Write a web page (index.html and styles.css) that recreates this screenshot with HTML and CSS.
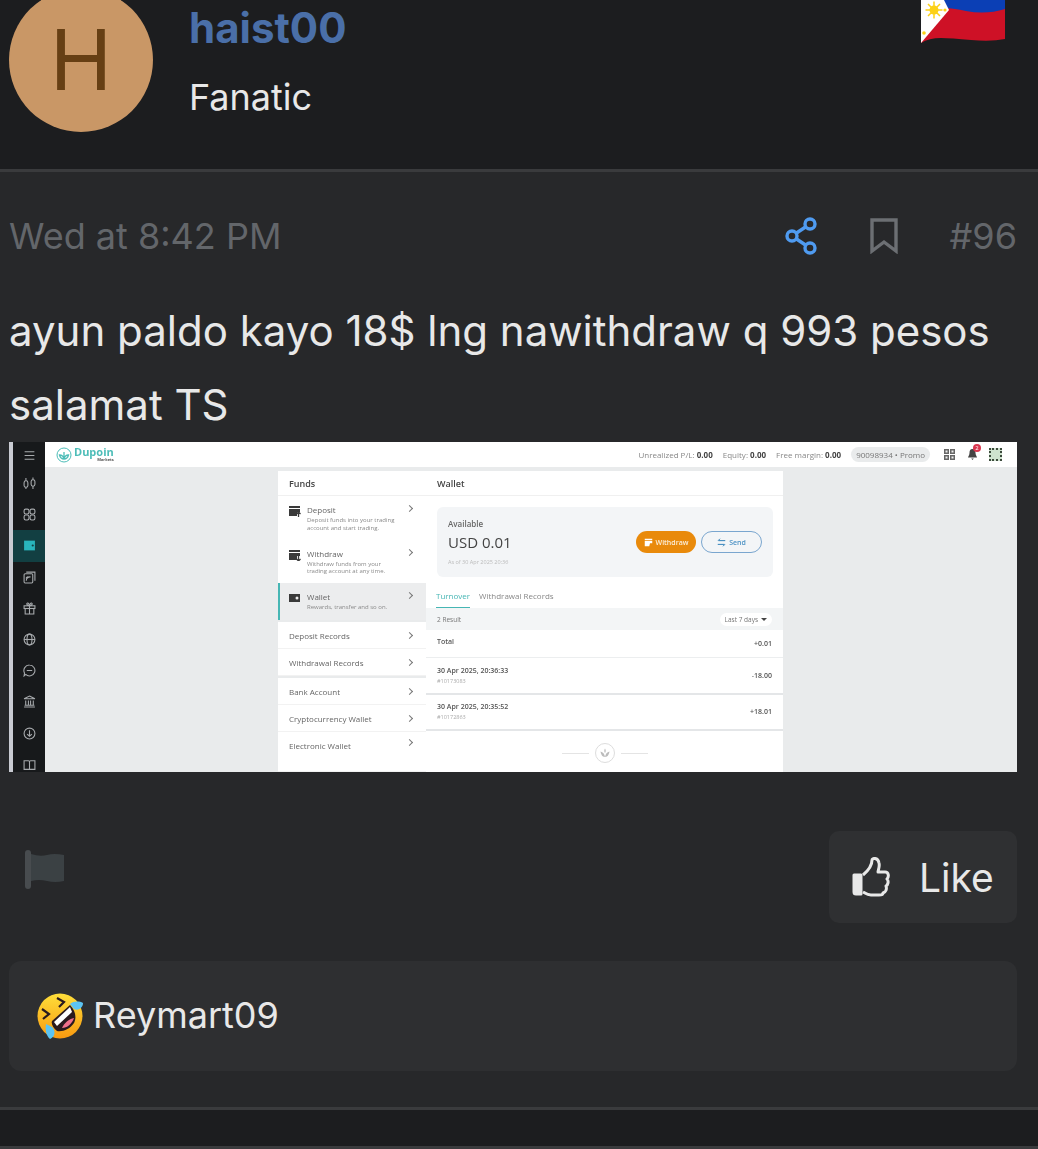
FILE: index.html
```html
<!DOCTYPE html>
<html lang="en">
<head>
    <meta charset="UTF-8">
    <meta name="viewport" content="width=device-width, initial-scale=1.0">
    <title>haist00 post #96</title>
    <link rel="stylesheet" href="styles.css">
</head>
<body>
    <!-- Author -->
    <header class="author">
        <div class="avatar">H</div>
        <div class="author-info">
            <a href="#" class="author-name">haist00</a>
            <div class="author-rank">Fanatic</div>
        </div>
        <svg class="flag" width="84" height="43" viewBox="0 0 84 43">
            <path d="M0 0H84V39Q70 42 50 40T20 38Q8 38 0 43Z" fill="#ce1126"/>
            <path d="M18 0H84V9Q65 15 45 11T27 9Z" fill="#0b3fb5"/>
            <path d="M0 0H23L28 10 0 43Z" fill="#fff"/>
            <path d="M13 1.500V18.500M4.500 10H21.500M7 4 19 16M19 4 7 16" stroke="#fcd116" stroke-width="1.500"/>
            <circle cx="13" cy="10" r="4.500" fill="#fcd116"/>
            <circle cx="24" cy="10" r="1.600" fill="#fcd116"/>
            <circle cx="3" cy="33" r="1.800" fill="#fcd116"/>
        </svg>
    </header>

    <article class="post">
        <div class="post-meta">
            <span class="post-date">Wed at 8:42 PM</span>
            <div class="post-actions">
                <svg class="icon-share" width="34" height="38" viewBox="0 0 34 38" fill="none" stroke="#4f9bf0" stroke-width="3.400">
                    <circle cx="8" cy="19" r="5"/>
                    <circle cx="26" cy="7" r="5"/>
                    <circle cx="26" cy="31" r="5"/>
                    <path d="M12.500 16 21.500 10M12.500 22 21.500 28"/>
                </svg>
                <svg class="icon-bookmark" width="28" height="36" viewBox="0 0 28 36" fill="none" stroke="#6c6f73" stroke-width="3.400">
                    <path d="M2 2H26V33L14 24 2 33Z"/>
                </svg>
                <span class="post-number">#96</span>
            </div>
        </div>

        <p class="post-text">ayun paldo kayo 18$ lng nawithdraw q 993 pesos salamat TS</p>

        <!-- Zrzut ekranu z portfela -->
        <div class="shot">
            <div class="shot-rail"></div>
            <nav class="shot-side">
                <div class="side-item side-first"><svg viewBox="0 0 12 12"><path d="M1.500 6H10.500M1.500 2.500H10.500M1.500 9.500H10.500"/></svg></div>
                <div class="side-item"><svg viewBox="0 0 12 12"><rect x="1" y="3.500" width="3.500" height="6" rx="1.700"/><rect x="7.500" y="2.500" width="3.500" height="6" rx="1.700"/><path d="M2.700 1V3.500M2.700 9.500V11M9.200 .5V2.500M9.200 8.500V11"/></svg></div>
                <div class="side-item"><svg viewBox="0 0 12 12"><rect x="1" y="1" width="4.500" height="4.500" rx="1.500"/><rect x="6.500" y="1" width="4.500" height="4.500" rx="1.500"/><rect x="1" y="6.500" width="4.500" height="4.500" rx="1.500"/><rect x="6.500" y="6.500" width="4.500" height="4.500" rx="1.500"/></svg></div>
                <div class="side-item side-active"><svg viewBox="0 0 12 12"><path class="solid" d="M1 1.500H11V10.500H1Z"/><circle cx="9" cy="6" r="1" fill="#123f42" stroke="none"/></svg></div>
                <div class="side-item"><svg viewBox="0 0 12 12"><rect x="1" y="2.500" width="8" height="8.500" rx="1"/><path d="M3 1H11V9M3 9A3.500 3.500 0 0 1 7 5.500M3 7A1.500 1.500 0 0 1 5 5.500"/></svg></div>
                <div class="side-item"><svg viewBox="0 0 12 12"><rect x="1" y="3.500" width="10" height="2.500"/><path d="M2 6V11H10V6M6 3.500V11M6 3.500C3 3.500 3 .5 4.500 1 5.500 1.500 6 3.500 6 3.500 6 3.500 6.500 1.500 7.500 1 9 .5 9 3.500 6 3.500Z"/></svg></div>
                <div class="side-item"><svg viewBox="0 0 12 12"><circle cx="6" cy="6" r="5"/><ellipse cx="6" cy="6" rx="2.300" ry="5"/><path d="M1 6H11"/></svg></div>
                <div class="side-item"><svg viewBox="0 0 12 12"><path d="M6 1A5 5 0 1 1 2.500 9.600L1 11 1.400 8.300A5 5 0 0 1 6 1ZM3.500 6H8.500"/></svg></div>
                <div class="side-item"><svg viewBox="0 0 12 12"><path d="M6 1 11 3.500H1ZM2.500 5V9M5 5V9M7 5V9M9.500 5V9M1.500 9.500H10.500M1 11H11"/></svg></div>
                <div class="side-item"><svg viewBox="0 0 12 12"><circle cx="6" cy="6" r="5"/><path d="M6 3V8.500M3.800 6.500 6 8.500 8.200 6.500"/></svg></div>
                <div class="side-item"><svg viewBox="0 0 12 12"><path d="M1 2.500H5A1 1 0 0 1 6 3.500V10.500H1ZM11 2.500H7A1 1 0 0 0 6 3.500V10.500H11Z"/></svg></div>
            </nav>
            <div class="shot-main">
                <div class="topbar">
                    <div class="logo">
                        <svg width="16" height="16" viewBox="0 0 16 16" fill="none" stroke="#4dbdb8">
                            <circle cx="8" cy="8" r="7"/>
                            <path d="M8 12V5M8 12C5 12 4 10 3.500 8 6 8 7.500 9.500 8 12 8.500 9.500 10 8 12.500 8 12 10 11 12 8 12Z" stroke-width="1.300"/>
                        </svg>
                        <div class="logo-text">
                            <span class="logo-name">Dupoin</span>
                            <span class="logo-sub">Markets</span>
                        </div>
                    </div>
                    <div class="topbar-right">
                        <span class="stat">Unrealized P/L: <b>0.00</b></span>
                        <span class="stat">Equity: <b>0.00</b></span>
                        <span class="stat">Free margin: <b>0.00</b></span>
                        <span class="account">90098934 • Promo</span>
                        <svg class="top-icon" width="11" height="11" viewBox="0 0 11 11" fill="#666"><path d="M0 0H5V5H0ZM6 0H11V5H6ZM0 6H5V11H0ZM6 6H11V11H6Z"/><path d="M1.500 1.500H3.500V3.500H1.500ZM7.500 1.500H9.500V3.500H7.500ZM1.500 7.500H3.500V9.500H1.500ZM7.500 7.500H9.500V9.500H7.500Z" fill="#eee"/></svg>
                        <div class="bell">
                            <svg width="9" height="11" viewBox="0 0 9 11" fill="#444"><path d="M4.500 0C7 0 7.500 2 7.500 4 7.500 6 9 8 9 8.500H0C0 8 1.500 6 1.500 4 1.500 2 2 0 4.500 0ZM3.200 9.500H5.800L4.500 11Z"/></svg>
                            <span class="bell-badge">2</span>
                        </div>
                        <div class="dots"></div>
                    </div>
                </div>

                <div class="shot-content">
                    <section class="funds">
                        <div class="panel-title">Funds</div>
                        <div class="fund-item">
                            <svg class="fund-icon" viewBox="0 0 12 12"><path d="M0 1H11V3H0ZM0 4H11V7H8V11H0Z"/><path d="M9.500 12V7.500M7.500 9 9.500 7 11.500 9" fill="none" stroke="#3a3a3a" stroke-width="1.300"/></svg>
                            <div class="fund-text">
                                <div class="fund-name">Deposit</div>
                                <div class="fund-desc">Deposit funds into your trading<br>account and start trading.</div>
                            </div>
                            <span class="chev"></span>
                        </div>
                        <div class="fund-item">
                            <svg class="fund-icon" viewBox="0 0 12 12"><path d="M0 1H11V3H0ZM0 4H11V7H8V11H0Z"/><path d="M9.500 7V11.500M7.500 10 9.500 12 11.500 10" fill="none" stroke="#3a3a3a" stroke-width="1.300"/></svg>
                            <div class="fund-text">
                                <div class="fund-name">Withdraw</div>
                                <div class="fund-desc">Withdraw funds from your<br>trading account at any time.</div>
                            </div>
                            <span class="chev"></span>
                        </div>
                        <div class="fund-item fund-active">
                            <svg class="fund-icon" viewBox="0 0 12 12"><path d="M0 2H11V10H0Z"/><circle cx="8" cy="6" r="1.500" fill="#eee"/></svg>
                            <div class="fund-text">
                                <div class="fund-name">Wallet</div>
                                <div class="fund-desc">Rewards, transfer and so on.</div>
                            </div>
                            <span class="chev"></span>
                        </div>
                        <div class="fund-row fund-row-first">Deposit Records<span class="chev"></span></div>
                        <div class="fund-row">Withdrawal Records<span class="chev"></span></div>
                        <div class="fund-row fund-row-group">Bank Account<span class="chev"></span></div>
                        <div class="fund-row">Cryptocurrency Wallet<span class="chev"></span></div>
                        <div class="fund-row">Electronic Wallet<span class="chev"></span></div>
                    </section>

                    <section class="wallet">
                        <div class="panel-title">Wallet</div>
                        <div class="balance">
                            <div>
                                <div class="balance-label">Available</div>
                                <div class="balance-value">USD 0.01</div>
                                <div class="balance-date">As of 30 Apr 2025 20:36</div>
                            </div>
                            <div class="balance-buttons">
                                <a href="#" class="pill pill-orange">
                                    <svg width="9" height="9" viewBox="0 0 12 12" fill="#fff"><path d="M1 1H11V3H1ZM1 4H11V7H8L7 11H1Z"/></svg>
                                    Withdraw
                                </a>
                                <a href="#" class="pill pill-outline">
                                    <svg width="9" height="9" viewBox="0 0 12 12" fill="none" stroke="#2d7fb8" stroke-width="1.300"><path d="M11 3.500H2M4 1 1.500 3.500M1 8.500H10M8 11 10.500 8.500"/></svg>
                                    Send
                                </a>
                            </div>
                        </div>
                        <div class="tabs">
                            <span class="tab tab-active">Turnover</span>
                            <span class="tab">Withdrawal Records</span>
                        </div>
                        <div class="filter-bar">
                            <span>2 Result</span>
                            <span class="filter-pill">Last 7 days <i class="caret"></i></span>
                        </div>
                        <div class="tx tx-total">
                            <div class="tx-date tx-total-label">Total</div>
                            <div class="tx-amount">+0.01</div>
                        </div>
                        <div class="tx">
                            <div>
                                <div class="tx-date">30 Apr 2025, 20:36:33</div>
                                <div class="tx-id">#10173083</div>
                            </div>
                            <div class="tx-amount">-18.00</div>
                        </div>
                        <div class="tx">
                            <div>
                                <div class="tx-date">30 Apr 2025, 20:35:52</div>
                                <div class="tx-id">#10172863</div>
                            </div>
                            <div class="tx-amount">+18.01</div>
                        </div>
                        <div class="wallet-end">
                            <span class="end-line"></span>
                            <span class="end-badge">
                                <svg width="14" height="14" viewBox="0 0 14 14" fill="#bbb"><path d="M7 11C4 11 3 8 2.500 5.500 5 6 6.500 8 7 11 7.500 8 9 6 11.500 5.500 11 8 10 11 7 11ZM7 7C6 5.500 6 4 7 2.500 8 4 8 5.500 7 7Z"/></svg>
                            </span>
                            <span class="end-line"></span>
                        </div>
                    </section>
                </div>
            </div>
        </div>

        <div class="post-tools">
            <svg class="icon-report" width="40" height="40" viewBox="0 0 40 40">
                <rect x="0" y="0" width="6" height="39" rx="3" fill="#484c4f"/>
                <path d="M6 4Q15 7 22 5T39 5V31Q30 33 22 31T6 31Z" fill="#3b4144"/>
            </svg>
            <a href="#" class="like-button">
                <svg width="38" height="40" viewBox="0 0 38 40" fill="none" stroke="#e8e8e8" stroke-width="3" stroke-linejoin="round">
                    <path d="M11 18 C17 13 20 9 20 3 C20 1 26 0 27 6 C28 10 26 13 26 15 H33 C37 15 37 20 35 22 C37 24 36 28 34 29 C35 32 34 35 31 36 C31 38 29 38 27 38 H19 C15 38 13 36 11 35"/>
                    <path d="M2 18H9V37H4Q2 37 2 35Z" fill="#e8e8e8"/>
                </svg>
                Like
            </a>
        </div>

        <div class="reactions">
            <svg class="emoji" width="46" height="46" viewBox="0 0 46 46">
                <defs>
                    <linearGradient id="face" x1="0" y1="0" x2="0" y2="1">
                        <stop offset="0" stop-color="#fede3a"/>
                        <stop offset="1" stop-color="#f99a10"/>
                    </linearGradient>
                </defs>
                <circle cx="23" cy="23" r="22.500" fill="url(#face)"/>
                <path d="M33 12C38 17 40 24 37 30 33 36 26 39 20 38 16 35 14 31 15 28Z" fill="#2a1a1e"/>
                <path d="M33 14 17 29 20 33 35 19Z" fill="#fff"/>
                <path d="M37 25C35 31 30 35 25 35 27 30 32 26 37 25Z" fill="#f0708c"/>
                <path d="M20 5 27 9 22 14M5 16 12 21 6 26" fill="none" stroke="#2a1a1e" stroke-width="2.200"/>
                <path d="M33 11C37 8 42 8 46 10 46 15 41 18 37 16Z" fill="#5cc4f2"/>
                <path d="M9 31C8 36 9 43 13 46 18 44 19 38 15 34Z" fill="#5cc4f2"/>
            </svg>
            <span class="reaction-name">Reymart09</span>
        </div>
    </article>

    <div class="page-gap"></div>
</body>
</html>
```

FILE: styles.css
```css
/* Ogólne ustawienia */
body {
    font-family: Inter, "Liberation Sans", sans-serif;
    margin: 0;
    padding: 0;
    background-color: #1c1d1f;
    color: #e8e8e8;
    overflow: hidden;
}

a {
    text-decoration: none;
}

/* Author */
.author {
    display: flex;
    gap: 36px;
    height: 184px;
    margin-top: -12px;
    padding-left: 9px;
    padding-right: 33px;
    box-sizing: border-box;
    border-bottom: 3px solid #3a3b3d;
}

.avatar {
    width: 144px;
    height: 144px;
    border-radius: 50%;
    background-color: #c99766;
    color: #663f14;
    font-size: 84px;
    line-height: 144px;
    text-align: center;
    flex-shrink: 0;
}

.author-info {
    flex: 1;
    padding-top: 12px;
}

.author-name {
    display: block;
    color: #4a6fa8;
    font-size: 42px;
    font-weight: 700;
    line-height: 56px;
}

.author-rank {
    margin-top: 20px;
    font-size: 36px;
    line-height: 42px;
}

.flag {
    margin-top: 12px;
}

/* Post */
.post {
    background-color: #27282a;
    padding: 0 21px 0 9px;
    height: 938px;
    box-sizing: border-box;
    border-bottom: 3px solid #3a3b3d;
}

.post-meta {
    display: flex;
    justify-content: space-between;
    align-items: center;
    height: 122px;
    padding-top: 6px;
    box-sizing: border-box;
}

.post-date {
    color: #63666a;
    font-size: 36px;
}

.post-actions {
    display: flex;
    align-items: center;
    gap: 52px;
    color: #63666a;
    font-size: 36px;
}

.post-text {
    margin: 0;
    font-size: 42px;
    line-height: 74px;
    color: #e8e8e8;
}

/* Zrzut ekranu */
.shot {
    display: flex;
    height: 330px;
    background-color: #e9ebec;
    font-family: "Open Sans", "Liberation Sans", sans-serif;
    color: #555;
    filter: blur(0.5px);
    overflow: hidden;
}

.shot-rail {
    width: 4px;
    background-color: #c9cbd2;
}

.shot-side {
    width: 32px;
    background-color: #17191b;
    flex-shrink: 0;
}

.side-item {
    display: flex;
    align-items: center;
    justify-content: center;
    height: 31.2px;
}

.side-item svg {
    width: 13px;
    height: 13px;
    fill: none;
    stroke: #a7aaad;
    stroke-width: 1;
}

.side-first {
    height: 26px;
}

.side-active {
    background-color: #123f42;
}

.side-active svg .solid {
    fill: #29b5bd;
    stroke: none;
}

.shot-main {
    flex: 1;
    display: flex;
    flex-direction: column;
    min-width: 0;
}

.topbar {
    display: flex;
    justify-content: space-between;
    align-items: center;
    height: 25px;
    padding: 0 15px 0 11px;
    background-color: #fff;
    flex-shrink: 0;
}

.logo {
    display: flex;
    align-items: center;
    gap: 2px;
}

.logo-text {
    display: flex;
    flex-direction: column;
    align-items: flex-end;
}

.logo-name {
    color: #4dbdb8;
    font-size: 11px;
    font-weight: 700;
    line-height: 10px;
}

.logo-sub {
    color: #555;
    font-size: 4px;
    line-height: 5px;
    font-weight: 700;
}

.topbar-right {
    display: flex;
    align-items: center;
    gap: 10px;
    font-size: 8px;
    color: #888;
}

.stat b {
    color: #444;
}

.account {
    background-color: #e9ebec;
    border-radius: 9px;
    padding: 2px 5px;
    color: #777;
}

.top-icon {
    margin-left: 4px;
}

.bell {
    position: relative;
    display: flex;
    margin-left: 3px;
}

.bell-badge {
    position: absolute;
    top: -5px;
    right: -4px;
    width: 8px;
    height: 8px;
    border-radius: 50%;
    background-color: #d9364f;
    color: #fff;
    font-size: 6px;
    line-height: 8px;
    text-align: center;
}

.dots {
    width: 9px;
    height: 9px;
    margin-left: 2px;
    background-color: #cfe3cf;
    border: 2px dotted #3c4a3c;
}

.shot-content {
    display: flex;
    padding: 4px 0 0 233px;
    flex: 1;
}

.funds {
    width: 148px;
    background-color: #e9ebec;
    display: flex;
    flex-direction: column;
    flex-shrink: 0;
}

.panel-title {
    height: 25px;
    padding-left: 11px;
    background-color: #fff;
    border-bottom: 1px solid #f0f0f0;
    box-sizing: border-box;
    font-size: 9px;
    font-weight: 600;
    line-height: 25px;
    color: #444;
}

.fund-item {
    display: flex;
    gap: 6px;
    padding: 8px 11px 0 11px;
    height: 43.5px;
    box-sizing: border-box;
    background-color: #fff;
}

.fund-icon {
    width: 12px;
    height: 12px;
    margin-top: 1px;
    fill: #3a3a3a;
    flex-shrink: 0;
}

.fund-text {
    flex: 1;
}

.fund-name {
    font-size: 8px;
    line-height: 11px;
    color: #666;
}

.fund-desc {
    margin-top: 2px;
    font-size: 6px;
    line-height: 7.5px;
    color: #8a8a8a;
    white-space: nowrap;
}

.fund-active {
    height: 37px;
    padding-left: 9px;
    background-color: #ecedee;
    border-left: 2px solid #46b6b4;
}

.chev {
    width: 4px;
    height: 4px;
    margin: 2px 3px 0 0;
    border-top: 1px solid #777;
    border-right: 1px solid #777;
    transform: rotate(45deg);
    flex-shrink: 0;
}

.fund-row {
    display: flex;
    justify-content: space-between;
    align-items: center;
    height: 27px;
    padding: 0 11px;
    box-sizing: border-box;
    background-color: #fff;
    border-bottom: 1px solid #f2f2f2;
    font-size: 8px;
    color: #666;
}

.fund-row .chev {
    margin-top: 0;
}

.fund-row-first {
    margin-top: 2px;
}

.fund-row-group {
    margin-top: 2px;
}

.funds .fund-row:last-child {
    flex: 1;
    height: auto;
    align-items: flex-start;
    padding-top: 8px;
}

.wallet {
    width: 357px;
    background-color: #fff;
    display: flex;
    flex-direction: column;
    flex-shrink: 0;
}

.balance {
    display: flex;
    justify-content: space-between;
    align-items: center;
    margin: 11px 10px 0 11px;
    height: 70px;
    padding: 0 11px;
    box-sizing: border-box;
    background-color: #f3f5f7;
    border-radius: 6px;
}

.balance-label {
    font-size: 8px;
    font-weight: 600;
    color: #666;
    line-height: 11px;
}

.balance-value {
    font-size: 15px;
    font-weight: 500;
    line-height: 20px;
    margin-top: 2.5px;
    color: #444;
}

.balance-date {
    font-size: 5.5px;
    line-height: 7px;
    margin-top: 7.5px;
    color: #bbb;
}

.balance-buttons {
    display: flex;
    gap: 5px;
}

.pill {
    display: flex;
    align-items: center;
    justify-content: center;
    gap: 3px;
    width: 60px;
    height: 22px;
    box-sizing: border-box;
    border-radius: 11px;
    font-size: 7px;
    font-weight: 600;
}

.pill-orange {
    background-color: #e98a0b;
    color: #fbeeda;
}

.pill-outline {
    width: 61px;
    border: 1px solid #7aa6cf;
    color: #4c92c4;
}

.tabs {
    display: flex;
    gap: 9px;
    margin-top: 11px;
    padding-left: 10px;
    font-size: 8px;
    color: #888;
    height: 20px;
    flex-shrink: 0;
}

.tab {
    line-height: 15px;
}

.tab-active {
    height: 20px;
    box-sizing: border-box;
    color: #46b6b4;
    border-bottom: 1px solid #46b6b4;
}

.filter-bar {
    display: flex;
    justify-content: space-between;
    align-items: center;
    height: 22px;
    padding: 0 11px;
    background-color: #f3f5f6;
    font-size: 6.5px;
    color: #777;
    flex-shrink: 0;
}

.filter-pill {
    display: flex;
    align-items: center;
    gap: 3px;
    background-color: #fff;
    border-radius: 7px;
    padding: 2px 5px;
}

.caret {
    border-left: 3px solid transparent;
    border-right: 3px solid transparent;
    border-top: 3px solid #444;
}

.tx {
    display: flex;
    justify-content: space-between;
    align-items: center;
    height: 36.5px;
    padding: 0 11px;
    box-sizing: border-box;
    border-bottom: 2px solid #e4e6e8;
    flex-shrink: 0;
}

.tx-total {
    height: 28px;
    border-bottom: 1px solid #eceeef;
}

.tx-total-label {
    font-weight: 400;
    margin-top: -4px;
}

.tx-date {
    font-size: 7px;
    font-weight: 600;
    color: #555;
    line-height: 10px;
}

.tx-id {
    font-size: 5.5px;
    line-height: 8px;
    margin-top: 1px;
    color: #aaa;
}

.tx-amount {
    font-size: 7px;
    font-weight: 600;
    color: #555;
}

.wallet-end {
    flex: 1;
    display: flex;
    align-items: center;
    justify-content: center;
    gap: 6px;
    padding-top: 3px;
}

.end-line {
    width: 27px;
    height: 1px;
    background-color: #e4e4e4;
}

.end-badge {
    display: flex;
    align-items: center;
    justify-content: center;
    width: 20px;
    height: 20px;
    box-sizing: border-box;
    border: 1px solid #ddd;
    border-radius: 50%;
}

/* Przyciski */
.post-tools {
    display: flex;
    justify-content: space-between;
    align-items: flex-start;
    margin-top: 59px;
    padding-left: 16px;
}

.icon-report {
    margin-top: 19px;
}

.like-button {
    display: flex;
    align-items: center;
    gap: 29px;
    width: 188px;
    height: 92px;
    padding-left: 23px;
    box-sizing: border-box;
    border-radius: 10px;
    background-color: #2f3032;
    color: #e8e8e8;
    font-size: 39px;
}

.reactions {
    display: flex;
    align-items: center;
    gap: 10px;
    height: 110px;
    margin-top: 38px;
    padding-left: 28px;
    border-radius: 12px;
    background-color: #2e2f31;
    font-size: 36px;
    color: #e8e8e8;
}

.reaction-name {
    margin-top: -3px;
}

.page-gap {
    height: 39px;
    box-sizing: border-box;
    border-bottom: 3px solid #3a3b3d;
}
```
